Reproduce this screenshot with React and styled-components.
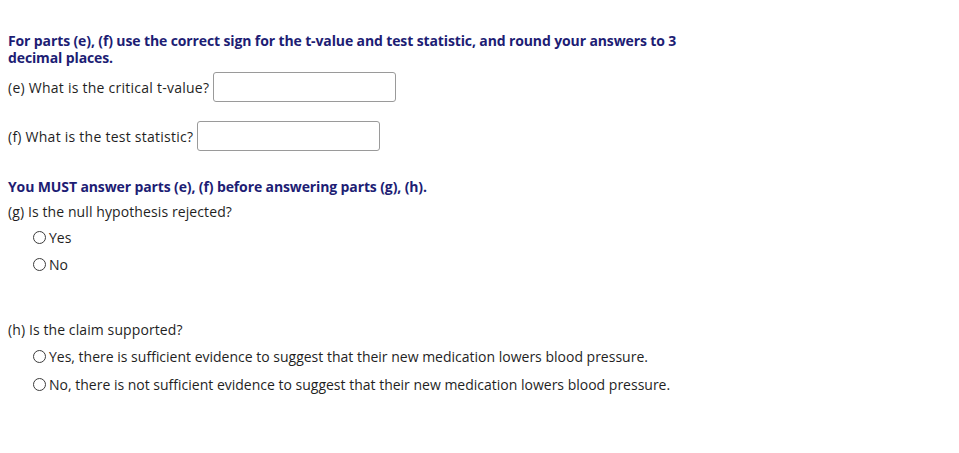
import styled, { createGlobalStyle } from 'styled-components'

const GlobalStyle = createGlobalStyle`
  html, body {
    margin: 0;
    padding: 0;
    background: #ffffff;
  }
  body {
    font-family: "Open Sans", "Liberation Sans", sans-serif;
    font-size: 14px;
    color: #1f1f1f;
  }
`

const Page = styled.div`
  width: 959px;
  height: 453px;
  padding: 32px 0 0 8px;
  box-sizing: border-box;
`

const Instructions = styled.div`
  font-weight: 700;
  color: #1d1d74;
  line-height: 17px;
  letter-spacing: -0.12px;
  width: 680px;
  margin-top: ${p => p.$top || 0}px;
`

const QuestionRow = styled.div`
  display: flex;
  align-items: center;
  gap: 4px;
  margin-top: ${p => p.$top}px;
`

const Label = styled.span`
  line-height: 17px;
  letter-spacing: 0.25px;
`

const AnswerBox = styled.input`
  width: 183px;
  height: 30px;
  box-sizing: border-box;
  border: 1px solid #9a9a9a;
  border-radius: 3px;
  padding: 0 6px;
  font: inherit;
  outline: none;
`

const Question = styled.div`
  line-height: 17px;
  letter-spacing: 0.1px;
  margin-top: ${p => p.$top}px;
`

const Options = styled.div`
  display: flex;
  flex-direction: column;
  margin-top: ${p => p.$top}px;
`

const Option = styled.label`
  display: flex;
  align-items: center;
  height: ${p => p.$h}px;
  padding-left: 25px;
`

const Radio = styled.input`
  appearance: none;
  width: 13px;
  height: 13px;
  margin: 0 3px 0 0;
  border: 1px solid #3c3c3c;
  border-radius: 50%;
  background: #fff;
  box-sizing: border-box;
`

export default function App() {
  return (
    <>
      <GlobalStyle />
      <Page>
        <Instructions>
          For parts (e), (f) use the correct sign for the t-value and test statistic, and round your answers to 3 decimal places.
        </Instructions>

        <QuestionRow $top={6}>
          <Label>(e) What is the critical t-value?</Label>
          <AnswerBox type="text" />
        </QuestionRow>

        <QuestionRow $top={19}>
          <Label>(f) What is the test statistic?</Label>
          <AnswerBox type="text" />
        </QuestionRow>

        <Instructions $top={27}>
          You MUST answer parts (e), (f) before answering parts (g), (h).
        </Instructions>

        <Question $top={8}>(g) Is the null hypothesis rejected?</Question>
        <Options $top={4}>
          <Option $h={27}><Radio type="radio" name="g" />Yes</Option>
          <Option $h={27}><Radio type="radio" name="g" />No</Option>
        </Options>

        <Question $top={43}>(h) Is the claim supported?</Question>
        <Options $top={4}>
          <Option $h={28}>
            <Radio type="radio" name="h" />
            Yes, there is sufficient evidence to suggest that their new medication lowers blood pressure.
          </Option>
          <Option $h={28}>
            <Radio type="radio" name="h" />
            No, there is not sufficient evidence to suggest that their new medication lowers blood pressure.
          </Option>
        </Options>
      </Page>
    </>
  )
}
